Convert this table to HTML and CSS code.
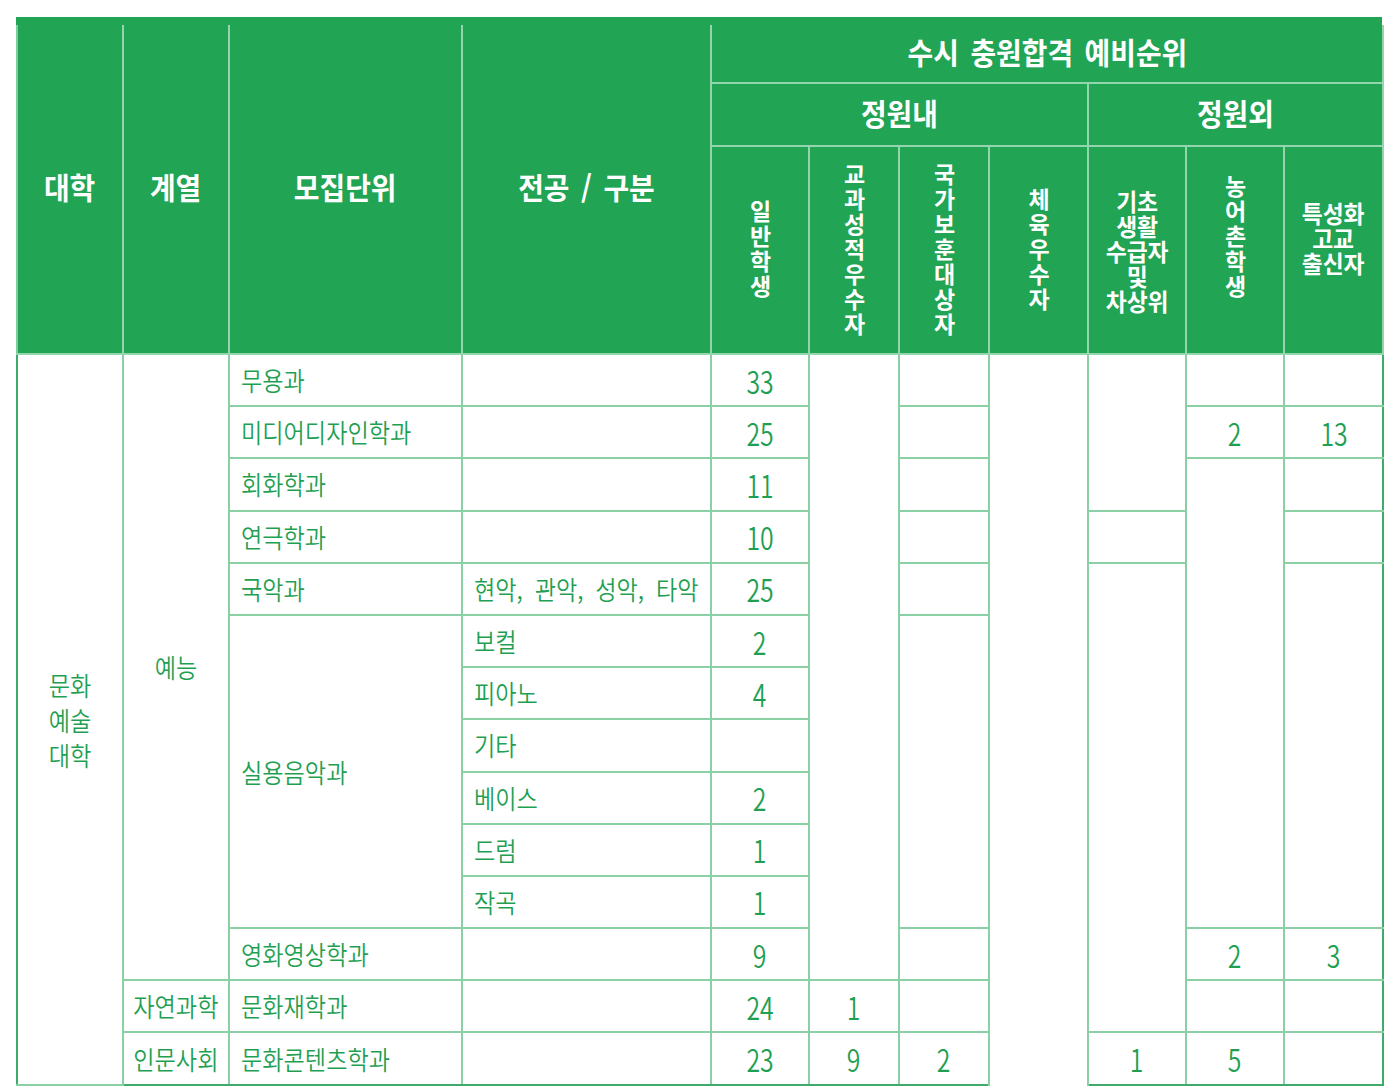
FILE: index.html
```html
<!DOCTYPE html>
<html lang="ko">
<head>
<meta charset="utf-8">
<title>수시 충원합격 예비순위</title>
<link rel="stylesheet" href="styles.css">
</head>
<body>
<div class="wrap">
<table class="grid">
  <colgroup>
    <col class="w106"><col class="w106"><col class="w233"><col class="w249">
    <col class="w98"><col class="w90"><col class="w90"><col class="w99">
    <col class="w98"><col class="w98"><col class="w99">
  </colgroup>
  <thead>
    <tr class="r1">
      <th rowspan="3" class="up"><span class="hk">대학</span></th>
      <th rowspan="3" class="up"><span class="hk">계열</span></th>
      <th rowspan="3" class="up"><span class="hk">모집단위</span></th>
      <th rowspan="3" class="up"><span class="hk">전공 / 구분</span></th>
      <th colspan="7" class="up"><span class="hk">수시 충원합격 예비순위</span></th>
    </tr>
    <tr class="r2">
      <th colspan="4" class="up"><span class="hk">정원내</span></th>
      <th colspan="3" class="up"><span class="hk">정원외</span></th>
    </tr>
    <tr class="r3">
      <th><span class="v">일반학생</span></th>
      <th><span class="v">교과성적우수자</span></th>
      <th><span class="v">국가보훈대상자</span></th>
      <th><span class="v">체육우수자</span></th>
      <th><span class="hs">기초<br>생활<br>수급자<br>및<br>차상위</span></th>
      <th class="raise"><span class="v">농어촌학생</span></th>
      <th class="raise"><span class="hs">특성화<br>고교<br>출신자</span></th>
    </tr>
  </thead>
  <tbody>
    <tr>
      <td rowspan="14" class="first"><span class="k ml">문화<br>예술<br>대학</span></td>
      <td rowspan="12"><span class="k">예능</span></td>
      <td class="l"><span class="k">무용과</span></td>
      <td class="l"></td>
      <td><span class="n">33</span></td>
      <td rowspan="12"></td>
      <td></td>
      <td rowspan="14" class="open"></td>
      <td rowspan="3"></td>
      <td></td>
      <td class="last"></td>
    </tr>
    <tr>
      <td class="l"><span class="k">미디어디자인학과</span></td>
      <td class="l"></td>
      <td><span class="n">25</span></td>
      <td></td>
      <td><span class="n">2</span></td>
      <td class="last"><span class="n">13</span></td>
    </tr>
    <tr>
      <td class="l"><span class="k">회화학과</span></td>
      <td class="l"></td>
      <td><span class="n">11</span></td>
      <td></td>
      <td rowspan="9"></td>
      <td class="last"></td>
    </tr>
    <tr>
      <td class="l"><span class="k">연극학과</span></td>
      <td class="l"></td>
      <td><span class="n">10</span></td>
      <td></td>
      <td></td>
      <td class="last"></td>
    </tr>
    <tr>
      <td class="l"><span class="k">국악과</span></td>
      <td class="l"><span class="k ws">현악, 관악, 성악, 타악</span></td>
      <td><span class="n">25</span></td>
      <td></td>
      <td rowspan="9"></td>
      <td rowspan="7" class="last"></td>
    </tr>
    <tr>
      <td rowspan="6" class="l"><span class="k">실용음악과</span></td>
      <td class="l"><span class="k">보컬</span></td>
      <td><span class="n">2</span></td>
      <td rowspan="6"></td>
    </tr>
    <tr>
      <td class="l"><span class="k">피아노</span></td>
      <td><span class="n">4</span></td>
    </tr>
    <tr>
      <td class="l"><span class="k">기타</span></td>
      <td></td>
    </tr>
    <tr>
      <td class="l"><span class="k">베이스</span></td>
      <td><span class="n">2</span></td>
    </tr>
    <tr>
      <td class="l"><span class="k">드럼</span></td>
      <td><span class="n">1</span></td>
    </tr>
    <tr>
      <td class="l"><span class="k">작곡</span></td>
      <td><span class="n">1</span></td>
    </tr>
    <tr>
      <td class="l"><span class="k">영화영상학과</span></td>
      <td class="l"></td>
      <td><span class="n">9</span></td>
      <td></td>
      <td><span class="n">2</span></td>
      <td class="last"><span class="n">3</span></td>
    </tr>
    <tr>
      <td><span class="k">자연과학</span></td>
      <td class="l"><span class="k">문화재학과</span></td>
      <td class="l"></td>
      <td><span class="n">24</span></td>
      <td><span class="n">1</span></td>
      <td></td>
      <td></td>
      <td class="last"></td>
    </tr>
    <tr>
      <td><span class="k">인문사회</span></td>
      <td class="l"><span class="k">문화콘텐츠학과</span></td>
      <td class="l"></td>
      <td><span class="n">23</span></td>
      <td><span class="n">9</span></td>
      <td><span class="n">2</span></td>
      <td><span class="n">1</span></td>
      <td><span class="n">5</span></td>
      <td class="last"></td>
    </tr>
  </tbody>
</table>
</div>
</body>
</html>
```

FILE: styles.css
```css
* { box-sizing: border-box; }

body {
  margin: 0;
  background: #ffffff;
  font-family: "Noto Sans CJK KR", "Noto Sans", sans-serif;
}

.wrap {
  margin: 17px 0 0 16px;
  width: 1366px;
  border-top: 8px solid #22a455;
}

.grid {
  width: 1366px;
  border-collapse: collapse;
  table-layout: fixed;
}

.w106 { width: 106px; }
.w233 { width: 233px; }
.w249 { width: 249px; }
.w98 { width: 98px; }
.w90 { width: 90px; }
.w99 { width: 99px; }

.grid th {
  background: #22a455;
  color: #ffffff;
  font-weight: 700;
  border: 2px solid #93d5ad;
  padding: 0;
  text-align: center;
  vertical-align: middle;
  line-height: 1;
  font-size: 24px;
}

.grid th.up { padding-bottom: 6px; }
.grid th.raise { padding-bottom: 26px; }

.grid thead tr:first-child th { border-top: none; }
.grid thead th:first-child { border-left-color: #7fcc9c; }

.r1 { height: 58px; }
.r2 { height: 63px; }
.r3 { height: 208px; }

.hk {
  display: inline-block;
  white-space: nowrap;
  font-size: 30px;
  line-height: 1;
  word-spacing: 4px;
  transform: scaleX(0.93);
  transform-origin: center center;
}

.hs {
  display: inline-block;
  font-size: 24px;
  line-height: 25px;
  white-space: nowrap;
  transform: scaleX(0.95);
  transform-origin: center center;
}

.v {
  display: inline-block;
  vertical-align: middle;
  writing-mode: vertical-rl;
  text-orientation: upright;
  font-size: 23px;
  letter-spacing: 2px;
  line-height: 1;
}

.grid td {
  background: #ffffff;
  border: 2px solid #8bd0a5;
  color: #1f9f52;
  font-weight: 350;
  font-size: 26px;
  line-height: 1;
  height: 52.2px;
  padding: 0;
  text-align: center;
  vertical-align: middle;
}

.grid td.l {
  text-align: left;
  padding-left: 11px;
}

.grid td.first { border-left: 2px solid #3fab6a; }
.grid td.last { border-right: 2px solid #3fab6a; }
.grid td.open { border-bottom: none; }
.grid tbody tr:last-child td { border-bottom-color: #3fab6a; }

.k {
  display: inline-block;
  white-space: nowrap;
  font-size: 26px;
  line-height: 1;
  transform: scaleX(0.89);
  transform-origin: center center;
}

.l .k { transform-origin: left center; }

.ws { word-spacing: 6px; }

.ml { line-height: 35px; }

.n {
  display: inline-block;
  font-size: 31px;
  line-height: 1;
  transform: scaleX(0.8);
  transform-origin: center center;
}
```
